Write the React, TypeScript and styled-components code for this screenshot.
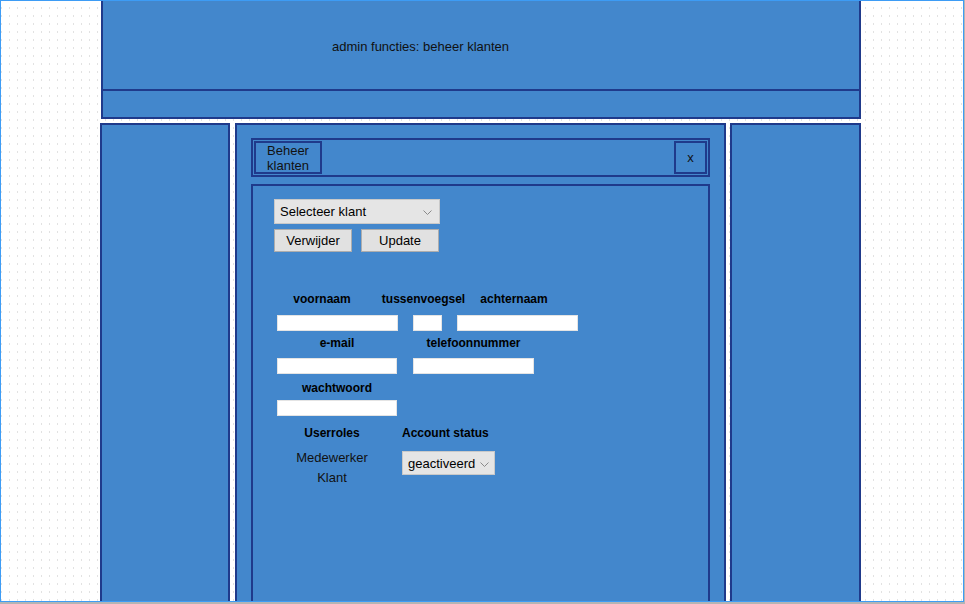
import React from 'react';
import styled, {createGlobalStyle} from 'styled-components';

const BLUE = '#4387cc';
const NAVY = '#1f3a8b';

const GlobalStyle = createGlobalStyle`
  html, body {
    margin: 0;
    padding: 0;
    background: #b4b4b4;
  }
  body {
    font-family: "Liberation Sans", Arial, sans-serif;
    color: #000;
  }
`;

// window frame with the dotted page background
const Frame = styled.div`
  width: 964px;
  height: 602px;
  box-sizing: border-box;
  border: 1px solid #3d9cf5;
  overflow: hidden;
  background-color: #fff;
  background-image: linear-gradient(to bottom, transparent 2px, #fff 2px),
    linear-gradient(to right, #e2e2e2 1px, transparent 1px);
  background-size: 8px 8px;
  background-position: 0 6px;
`;

const Page = styled.div`
  width: 761px;
  margin-left: 99px;
`;

const Header = styled.header`
  margin-left: 1px;
  width: 760px;
  box-sizing: border-box;
  background: ${BLUE};
  border: 2px solid ${NAVY};
  border-top: none;
`;

const Banner = styled.div`
  height: 90px;
  box-sizing: border-box;
  padding: 38px 0 0 229px;
  font-size: 13px;
  line-height: 15px;
  color: #111;
  border-bottom: 2px solid ${NAVY};
`;

const Nav = styled.nav`
  height: 26px;
`;

const Columns = styled.div`
  display: flex;
  margin-top: 4px;
`;

const SideColumn = styled.aside<{$w: number}>`
  width: ${p => p.$w}px;
  height: 520px;
  box-sizing: border-box;
  background: ${BLUE};
  border: 2px solid ${NAVY};
  border-bottom: none;
`;

const MainColumn = styled.main`
  width: 491px;
  height: 520px;
  margin: 0 4px 0 5px;
  box-sizing: border-box;
  background: ${BLUE};
  border: 2px solid ${NAVY};
  border-bottom: none;
  padding: 13px 14px 0;
`;

const TitleBar = styled.div`
  display: flex;
  justify-content: space-between;
  border: 2px solid ${NAVY};
  padding: 1px;
`;

const Tab = styled.div<{$w: number}>`
  width: ${p => p.$w}px;
  height: 33px;
  box-sizing: border-box;
  border: 2px solid ${NAVY};
  display: flex;
  align-items: center;
  justify-content: center;
  text-align: center;
  font-size: 13px;
  line-height: 15px;
  color: #111;
`;

const Content = styled.section`
  margin-top: 7px;
  height: 420px;
  border: 2px solid ${NAVY};
  border-bottom: none;
  padding: 13px 0 0 21px;
`;

const SelectWrap = styled.div<{$w: number; $h: number}>`
  position: relative;
  width: ${p => p.$w}px;
  height: ${p => p.$h}px;
`;

const Select = styled.select`
  appearance: none;
  width: 100%;
  height: 100%;
  box-sizing: border-box;
  margin: 0;
  padding: 0 0 0 5px;
  background: #e5e5e5;
  border: 1px solid #c9c9c9;
  border-radius: 0;
  font-family: "Liberation Sans", Arial, sans-serif;
  font-size: 13px;
  color: #000;
  outline: none;
`;

const Chevron = styled.svg<{$right: number}>`
  position: absolute;
  top: 11px;
  right: ${p => p.$right}px;
  pointer-events: none;
`;

const ButtonRow = styled.div`
  display: flex;
  gap: 9px;
  margin-top: 5px;
`;

const Button = styled.button`
  width: 78px;
  height: 23px;
  box-sizing: border-box;
  margin: 0;
  padding: 0;
  background: #e1e1e1;
  border: 1px solid #adadad;
  border-radius: 0;
  font-family: "Liberation Sans", Arial, sans-serif;
  font-size: 13px;
  color: #000;
`;

const Form = styled.div`
  margin: 39px 0 0 3px;
`;

const Row = styled.div<{$top: number}>`
  display: flex;
  align-items: flex-start;
  margin-top: ${p => p.$top}px;
`;

const Label = styled.div<{$w?: number; $gap?: number; $left?: boolean}>`
  width: ${p => (p.$w ? `${p.$w}px` : 'auto')};
  margin-left: ${p => p.$gap || 0}px;
  text-align: ${p => (p.$left ? 'left' : 'center')};
  font-size: 12px;
  font-weight: bold;
  line-height: 16px;
  white-space: nowrap;
`;

const Input = styled.input<{$w: number; $gap?: number}>`
  width: ${p => p.$w}px;
  height: 16px;
  box-sizing: border-box;
  margin: 0 0 0 ${p => p.$gap || 0}px;
  padding: 0 2px;
  background: #fff;
  border: 1px solid #e4e4e4;
  border-radius: 0;
  font-size: 12px;
  outline: none;
`;

const RoleList = styled.div`
  width: 110px;
  text-align: center;
  font-size: 13px;
  line-height: 20px;
  color: #111;
`;

const StatusCell = styled.div`
  margin: 3px 0 0 15px;
`;

const ChevronIcon = ({right}: {right: number}) => (
  <Chevron $right={right} width="9" height="5" viewBox="0 0 9 5">
    <path d="M0.5 0.5 L4.5 4.5 L8.5 0.5" fill="none" stroke="#8a8a8a" strokeWidth="1" />
  </Chevron>
);

export default function App() {
  return (
    <>
      <GlobalStyle />
      <Frame>
        <Page>
          <Header>
            <Banner>admin functies: beheer klanten</Banner>
            <Nav />
          </Header>
          <Columns>
            <SideColumn $w={130} />
            <MainColumn>
              <TitleBar>
                <Tab $w={68}>
                  Beheer
                  <br />
                  klanten
                </Tab>
                <Tab $w={33}>x</Tab>
              </TitleBar>
              <Content>
                <SelectWrap $w={166} $h={25}>
                  <Select defaultValue="">
                    <option value="">Selecteer klant</option>
                  </Select>
                  <ChevronIcon right={8} />
                </SelectWrap>
                <ButtonRow>
                  <Button>Verwijder</Button>
                  <Button>Update</Button>
                </ButtonRow>
                <Form>
                  <Row $top={0}>
                    <Label $w={90}>voornaam</Label>
                    <Label $w={113}>tussenvoegsel</Label>
                    <Label $w={68}>achternaam</Label>
                  </Row>
                  <Row $top={8}>
                    <Input $w={121} />
                    <Input $w={29} $gap={15} />
                    <Input $w={121} $gap={15} />
                  </Row>
                  <Row $top={4}>
                    <Label $w={120}>e-mail</Label>
                    <Label $w={121} $gap={16}>telefoonnummer</Label>
                  </Row>
                  <Row $top={7}>
                    <Input $w={120} />
                    <Input $w={121} $gap={16} />
                  </Row>
                  <Row $top={6}>
                    <Label $w={120}>wachtwoord</Label>
                  </Row>
                  <Row $top={4}>
                    <Input $w={120} />
                  </Row>
                  <Row $top={9}>
                    <Label $w={110}>Userroles</Label>
                    <Label $gap={15} $left>Account status</Label>
                  </Row>
                  <Row $top={7}>
                    <RoleList>
                      <div>Medewerker</div>
                      <div>Klant</div>
                    </RoleList>
                    <StatusCell>
                      <SelectWrap $w={93} $h={24}>
                        <Select defaultValue="geactiveerd">
                          <option value="geactiveerd">geactiveerd</option>
                        </Select>
                        <ChevronIcon right={6} />
                      </SelectWrap>
                    </StatusCell>
                  </Row>
                </Form>
              </Content>
            </MainColumn>
            <SideColumn $w={131} />
          </Columns>
        </Page>
      </Frame>
    </>
  );
}
